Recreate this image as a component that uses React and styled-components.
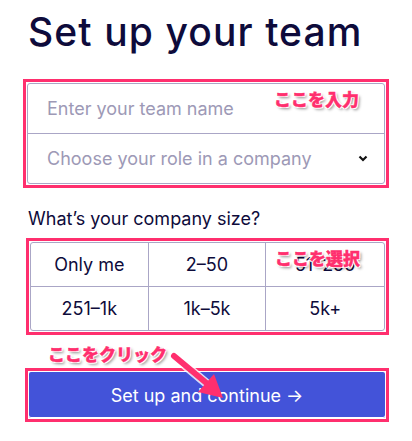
import React from "react";
import styled, { createGlobalStyle } from "styled-components";

const GlobalStyle = createGlobalStyle`
  body {
    margin: 0;
    background: #fff;
    font-family: Inter, "Noto Sans", sans-serif;
  }
`;

const Page = styled.div`
  width: 412px;
  height: 441px;
  overflow: hidden;
  display: flex;
  flex-direction: column;
  position: relative;
`;

const Title = styled.h1`
  margin: 8px 0 0 28px;
  font-size: 39px;
  line-height: 48px;
  font-weight: 500;
  color: #0e0b3b;
  letter-spacing: 1.1px;
`;

const Frame = styled.div`
  position: relative;
  margin-left: ${(p) => p.$left}px;
  margin-top: ${(p) => p.$top}px;
  width: ${(p) => p.$width}px;
  border: 3px solid #ff2f6e;
  padding: 1px;
  box-sizing: border-box;
`;

const FormBox = styled.div`
  border: 1px solid #aaa6c6;
  border-radius: 3px;
`;

const Field = styled.div`
  height: 49px;
  display: flex;
  align-items: center;
  justify-content: space-between;
  padding: 0 16px 0 19px;
  font-size: 18px;
  color: #9d99b6;
  & + & {
    border-top: 1px solid #aaa6c6;
  }
`;

const Label = styled.div`
  margin: 20px 0 0 28px;
  font-size: 18px;
  line-height: 22px;
  color: #0e0b3b;
`;

const SizeGrid = styled.div`
  display: grid;
  grid-template-columns: repeat(3, 1fr);
  border: 1px solid #aaa6c6;
  border-radius: 3px;
`;

const SizeCell = styled.div`
  height: 43px;
  display: flex;
  align-items: center;
  justify-content: center;
  font-size: 18px;
  color: #0e0b3b;
  border-right: ${(p) => (p.$last ? "none" : "1px solid #aaa6c6")};
  border-bottom: ${(p) => (p.$bottom ? "none" : "1px solid #aaa6c6")};
`;

const ClickNote = styled.div`
  margin: 8px 0 0 48px;
  height: 22px;
`;

const Note = styled.span`
  position: ${(p) => (p.$float ? "absolute" : "static")};
  top: ${(p) => p.$y}px;
  left: ${(p) => p.$x}px;
  font-family: "Noto Sans CJK JP", sans-serif;
  font-weight: 900;
  font-size: 17px;
  line-height: 22px;
  color: #ff2f6e;
  -webkit-text-stroke: 0.4px #ff2f6e;
  text-shadow: -1px -1px 0 #fff, 1px -1px 0 #fff, -1px 1px 0 #fff, 1px 1px 0 #fff,
    2px 2px 3px rgba(0, 0, 0, 0.45);
  white-space: nowrap;
`;

const Button = styled.button`
  display: block;
  width: 100%;
  height: 46px;
  border: none;
  border-radius: 2px;
  background: #4353d9;
  color: #fff;
  font-family: Inter, "Noto Sans", sans-serif;
  font-size: 18px;
  box-shadow: 0 -1px 0 #fff inset;
`;

const Arrow = styled.svg`
  position: absolute;
  left: 168px;
  top: 350px;
  overflow: visible;
`;

const Chevron = () => (
  <svg width="10" height="7" viewBox="0 0 10 7">
    <path d="M1.5 1.5 L5 5 L8.5 1.5" fill="none" stroke="#111" strokeWidth="2.2" />
  </svg>
);

const sizes = ["Only me", "2–50", "51–250", "251–1k", "1k–5k", "5k+"];

export default function App() {
  return (
    <Page>
      <GlobalStyle />
      <Title>Set up your team</Title>
      <Frame $left={23} $top={23} $width={366}>
        <FormBox>
          <Field>Enter your team name</Field>
          <Field>
            Choose your role in a company
            <Chevron />
          </Field>
        </FormBox>
        <Note $float $x={248} $y={6}>ここを入力</Note>
      </Frame>
      <Label>What’s your company size?</Label>
      <Frame $left={26} $top={8} $width={363}>
        <SizeGrid>
          {sizes.map((s, i) => (
            <SizeCell key={s} $last={i % 3 === 2} $bottom={i > 2}>
              {s}
            </SizeCell>
          ))}
        </SizeGrid>
        <Note $float $x={246} $y={6}>ここを選択</Note>
      </Frame>
      <ClickNote>
        <Note>ここをクリック</Note>
      </ClickNote>
      <Frame $left={25} $top={3} $width={364}>
        <Button>Set up and continue →</Button>
      </Frame>
      <Arrow width="60" height="50">
        <line x1="6" y1="6" x2="44" y2="38" stroke="#fff" strokeWidth="9" strokeLinecap="round" opacity="0.8" />
        <line x1="6" y1="6" x2="42" y2="36" stroke="#ff2f6e" strokeWidth="6" strokeLinecap="round" />
        <polygon points="55,48 30,42 46,24" fill="#ff2f6e" />
      </Arrow>
    </Page>
  );
}
